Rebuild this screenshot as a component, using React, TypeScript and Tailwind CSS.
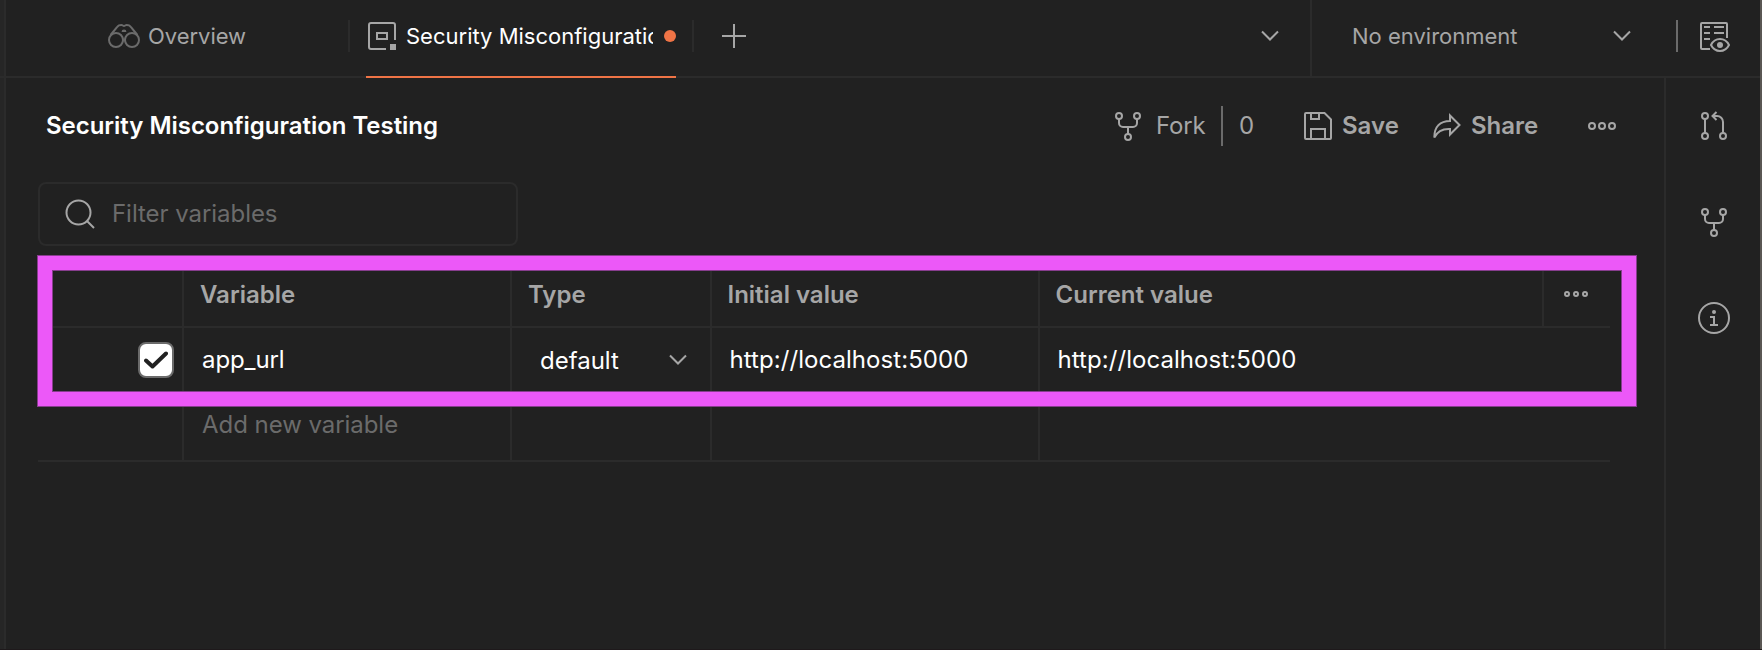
import React from "react";

type IconProps = { className?: string };

function Binoculars({ className }: IconProps) {
  return (
    <svg className={className} width="32" height="24" viewBox="0 0 32 24" fill="none" stroke="currentColor" strokeWidth="2">
      <circle cx="8" cy="16" r="7" />
      <circle cx="24" cy="16" r="7" />
      <path d="M2.6 11 L9.2 2.8 C10.4 1.2 12 1 13.4 1 C14.6 1 15 2 16 2 C17 2 17.4 1 18.6 1 C20 1 21.6 1.2 22.8 2.8 L29.4 11" />
      <path d="M13.6 8 A2.4 2.4 0 0 1 18.4 8 Z" fill="currentColor" stroke="none" />
      <path d="M15.2 14.5 h1.6 v3 h-1.6 Z" fill="currentColor" stroke="none" />
    </svg>
  );
}

function CollectionTab({ className }: IconProps) {
  return (
    <svg className={className} width="28" height="28" viewBox="0 0 28 28" fill="none" stroke="currentColor" strokeWidth="2">
      <path d="M18 27 H3 A2 2 0 0 1 1 25 V3 A2 2 0 0 1 3 1 H25 A2 2 0 0 1 27 3 V18" />
      <rect x="9" y="11" width="10" height="6" />
      <rect x="22" y="22" width="6" height="6" fill="currentColor" stroke="none" />
    </svg>
  );
}

function Plus() {
  return (
    <svg width="24" height="24" viewBox="0 0 24 24" fill="none" stroke="currentColor" strokeWidth="2">
      <path d="M12 0 V24 M0 12 H24" />
    </svg>
  );
}

function Chevron({ className }: IconProps) {
  return (
    <svg className={className} width="18" height="12" viewBox="0 0 18 12" fill="none" stroke="currentColor" strokeWidth="2">
      <path d="M1 1.5 L9 9.5 L17 1.5" />
    </svg>
  );
}

function EnvironmentEye({ className }: IconProps) {
  return (
    <svg className={className} width="30" height="30" viewBox="0 0 30 30" fill="none" stroke="currentColor" strokeWidth="2">
      <path d="M10 27 H2 A1 1 0 0 1 1 26 V2 A1 1 0 0 1 2 1 H26 A1 1 0 0 1 27 2 V16" />
      <path d="M4 5 H10 M14 5 H24 M4 11 H10 M14 11 H24 M4 17 H10" />
      <path d="M11 23 C13 19 16.5 17 20 17 C23.500 17 27 19 29 23 C27 27 23.500 29 20 29 C16.500 29 13 27 11 23 Z" />
      <circle cx="20" cy="23" r="3" fill="currentColor" stroke="none" />
    </svg>
  );
}

function Fork({ className }: IconProps) {
  return (
    <svg className={className} width="26" height="29" viewBox="0 0 26 29" fill="none" stroke="currentColor" strokeWidth="2">
      <circle cx="4" cy="4" r="3" />
      <circle cx="22" cy="4" r="3" />
      <circle cx="13" cy="25" r="3" />
      <path d="M4 7 V11 A4 4 0 0 0 8 15 H18 A4 4 0 0 0 22 11 V7 M13 15 V22" />
    </svg>
  );
}

function PullRequest() {
  return (
    <svg width="26" height="29" viewBox="0 0 26 29" fill="none" stroke="currentColor" strokeWidth="2">
      <circle cx="4" cy="5" r="3" />
      <circle cx="4" cy="25" r="3" />
      <circle cx="22" cy="25" r="3" />
      <path d="M4 8 V22 M22 22 V11 A6 6 0 0 0 16 5 H11.500 M15.500 1 L11.500 5 L15.500 9" />
    </svg>
  );
}

function Save() {
  return (
    <svg width="28" height="28" viewBox="0 0 28 28" fill="none" stroke="currentColor" strokeWidth="2">
      <path d="M2 1 H20.500 L27 7.500 V26 A1 1 0 0 1 26 27 H2 A1 1 0 0 1 1 26 V2 A1 1 0 0 1 2 1 Z" />
      <path d="M7 1 V7 H15 V1 M7 27 V17 H21 V27" />
    </svg>
  );
}

function Share() {
  return (
    <svg width="28" height="27" viewBox="0 0 28 27" fill="none" stroke="currentColor" strokeWidth="2">
      <path d="M17 2.500 L26.500 12 L17 21.500 V16 C9 15.600 4.500 18 1.300 24.500 C1.300 14 7 8 17 8 Z" />
    </svg>
  );
}

function MoreLarge() {
  return (
    <svg width="28" height="8" viewBox="0 0 28 8" fill="none" stroke="currentColor" strokeWidth="2">
      <circle cx="4" cy="4" r="3" />
      <circle cx="14" cy="4" r="3" />
      <circle cx="24" cy="4" r="3" />
    </svg>
  );
}

function MoreSmall() {
  return (
    <svg width="24" height="6" viewBox="0 0 24 6" fill="none" stroke="currentColor" strokeWidth="2">
      <circle cx="3" cy="3" r="2" />
      <circle cx="12" cy="3" r="2" />
      <circle cx="21" cy="3" r="2" />
    </svg>
  );
}

function Info() {
  return (
    <svg width="32" height="32" viewBox="0 0 32 32" fill="none" stroke="currentColor" strokeWidth="2">
      <circle cx="16" cy="16" r="15" />
      <circle cx="16" cy="10" r="2" fill="currentColor" stroke="none" />
      <path d="M12 15 H16 V23 M12 23 H20" />
    </svg>
  );
}

function Search() {
  return (
    <svg width="30" height="30" viewBox="0 0 30 30" fill="none" stroke="currentColor" strokeWidth="2">
      <circle cx="13.500" cy="13.500" r="12" />
      <path d="M22 22 L29 29" />
    </svg>
  );
}

function TopBar() {
  return (
    <header className="flex h-[78px] shrink-0 border-b-2 border-[#2b2b2b] text-[22px]">
      <div className="flex w-[344px] items-center pl-[102px] pb-1">
        <Binoculars className="text-[#6b6b6b]" />
        <span className="ml-2 w-[200px] tracking-[-0.03px]">Overview</span>
        <span className="h-8 w-0.5 bg-[#2b2b2b]" />
      </div>
      <div className="ml-4 flex h-[78px] w-[310px] items-center border-b-2 border-[#f07446] pb-1 pl-0.5">
        <CollectionTab />
        <span className="ml-2.5 w-[247px] overflow-hidden whitespace-nowrap text-white">Security Misconfiguration</span>
        <span className="ml-[11px] size-3 shrink-0 rounded-full bg-[#f07446]" />
      </div>
      <div className="flex flex-1 items-center pb-1 pl-4">
        <span className="h-8 w-0.5 bg-[#2b2b2b]" />
        <span className="ml-7">
          <Plus />
        </span>
        <Chevron className="mr-[31px] ml-auto" />
      </div>
      <div className="flex w-[450px] items-center border-l-2 border-[#2b2b2b] pb-1 pl-10">
        <span>No environment</span>
        <Chevron className="ml-auto" />
        <span className="ml-[45px] h-8 w-0.5 bg-[#6b6b6b]" />
        <EnvironmentEye className="mt-0.5 mr-[30px] ml-[22px]" />
      </div>
    </header>
  );
}

function Toolbar() {
  return (
    <div className="flex h-24 items-center pl-10 pr-12">
      <h1 className="font-semibold tracking-[-0.03px] text-white">Security Misconfiguration Testing</h1>
      <div className="ml-auto flex items-center">
        <Fork />
        <span className="ml-[15px] w-[65px] tracking-[-0.2px]">Fork</span>
        <span className="h-10 w-0.5 bg-[#6b6b6b]" />
        <span className="ml-4 w-[65px]">0</span>
        <Save />
        <span className="ml-2.5 w-[91px] font-semibold">Save</span>
        <Share />
        <span className="ml-2.5 w-[117px] font-semibold">Share</span>
        <MoreLarge />
      </div>
    </div>
  );
}

const grid = "grid grid-cols-[146px_328px_200px_328px_504px_66px]";
const cell = "border-r-2 border-[#2b2b2b]";

function VariablesTable() {
  return (
    <div className="relative ml-8 mt-4 w-[1572px]">
      <div className={`${grid} h-[66px] border-b-2 border-[#2b2b2b] font-semibold`}>
        <div className={cell} />
        <div className={`${cell} flex items-center pt-0.5 pl-4`}>Variable</div>
        <div className={`${cell} flex items-center pt-0.5 pl-4`}>Type</div>
        <div className={`${cell} flex items-center pt-0.5 pl-[15.5px]`}>Initial value</div>
        <div className={`${cell} flex items-center pt-0.5 pl-[15.5px]`}>Current value</div>
        <div className="flex items-center pl-5">
          <MoreSmall />
        </div>
      </div>
      <div className={`${grid} h-[66px] border-b-2 border-[#2b2b2b] text-white`}>
        <div className={`${cell} flex items-center justify-end pr-2`}>
          <span className="flex size-9 items-center justify-center rounded-lg border-2 border-[#6b6b6b] bg-white text-[#212121]">
            <svg width="24" height="18" viewBox="0 0 24 18" fill="none" stroke="currentColor" strokeWidth="4" strokeLinecap="round" strokeLinejoin="round">
              <path d="M2 9.500 L8.500 15.500 L22 2.500" />
            </svg>
          </span>
        </div>
        <div className={`${cell} flex items-center pl-[18px] tracking-[-0.1px]`}>app_url</div>
        <div className={`${cell} flex items-center justify-between pl-7 pr-[23px]`}>
          <span className="pt-0.5">default</span>
          <Chevron className="text-[#a6a6a6]" />
        </div>
        <div className={`${cell} flex items-center pl-[17.5px] tracking-[0.06px]`}>http://localhost:5000</div>
        <div className="flex items-center pl-[17.5px] tracking-[0.06px]">http://localhost:5000</div>
      </div>
      <div className={`${grid} h-[68px] border-b-2 border-[#2b2b2b] text-[#6b6b6b]`}>
        <div className={cell} />
        <div className={`${cell} flex items-center pb-1 pl-[18px] tracking-[-0.05px]`}>Add new variable</div>
        <div className={cell} />
        <div className={cell} />
      </div>
      <div className="absolute top-[-6px] left-0 h-[150px] w-[1598px] border-14 border-[#ec58f8] shadow-[0_0_0_1px_#873d8d,inset_0_0_0_1px_#873d8d]" />
    </div>
  );
}

export default function App() {
  return (
    <div className="flex h-[650px] w-[1762px] overflow-hidden border-b border-[#1e191b] bg-[#212121] font-['Inter',sans-serif] text-2xl leading-8 text-[#a6a6a6]">
      <div className="w-1.5 shrink-0 border-r-2 border-[#2b2b2b] bg-[#262626]">
        <div className="h-[78px] border-b-2 border-[#2b2b2b]" />
      </div>
      <div className="flex min-w-0 flex-1 flex-col">
        <TopBar />
        <div className="flex flex-1">
          <main className="w-[1658px]">
            <Toolbar />
            <div className="mt-2 ml-8 flex h-16 w-[480px] items-center rounded-lg border-2 border-[#2b2b2b] pl-[25px]">
              <Search />
              <span className="ml-[17px] tracking-[-0.05px] text-[#6b6b6b]">Filter variables</span>
            </div>
            <VariablesTable />
          </main>
          <aside className="flex flex-1 flex-col items-center border-l-2 border-[#2b2b2b] pt-[33px] pl-0.5">
            <PullRequest />
            <span className="mt-[68px]">
              <Fork />
            </span>
            <span className="mt-[65px]">
              <Info />
            </span>
          </aside>
        </div>
      </div>
      <div className="w-0.5 shrink-0 bg-[#5a5754]" />
    </div>
  );
}
